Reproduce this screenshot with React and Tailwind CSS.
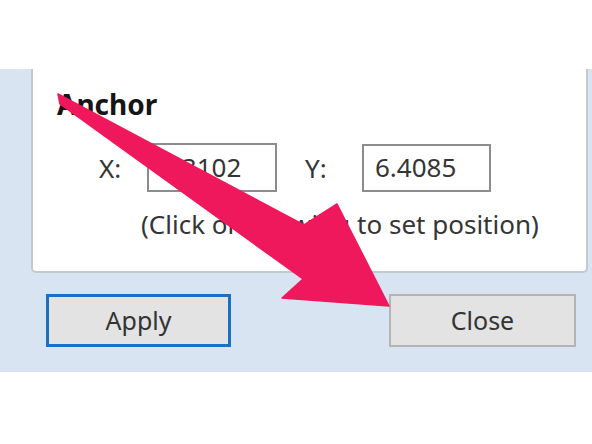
export default function App() {
  return (
    <div className="relative w-[592px] h-[444px] overflow-hidden bg-white font-['Noto_Sans',sans-serif] text-[#353535]">
      <div className="h-[69px] bg-white" />
      <div className="h-[303px] bg-[#d8e4f1] pl-[31px] pr-[4px] flex flex-col">
        {/* Anchor group box */}
        <div className="h-[204px] bg-white border-x-2 border-b-2 border-[#c3c9d0] rounded-b-[5px] pl-[24px] pt-[21px]">
          <div className="text-[28px] leading-[28px] font-bold text-[#151515]">Anchor</div>
          <div className="mt-[25px] ml-[42px] flex items-center">
            <span className="w-[48px] text-[26px] leading-none">X:</span>
            <div className="w-[130px] h-[49px] border-2 border-[#8c8c8c] flex items-center pl-[11px] text-[26px]">5.3102</div>
            <span className="ml-[28px] w-[57px] text-[26px] leading-none">Y:</span>
            <div className="w-[129px] h-[48px] border-2 border-[#8c8c8c] flex items-center pl-[11px] text-[26px]">6.4085</div>
          </div>
          <div className="mt-[18px] ml-[84px] text-[26px] leading-[28px] whitespace-nowrap">(Click on drawing to set position)</div>
        </div>
        {/* Dialog buttons */}
        <div className="mt-[21px] flex">
          <button className="ml-[15px] w-[185px] h-[53px] bg-[#e3e3e3] border-[3px] border-[#1a6fc9] text-[25px] text-[#333]">Apply</button>
          <button className="ml-[158px] w-[187px] h-[53px] bg-[#e3e3e3] border-2 border-[#b4b4b4] text-[25px] text-[#333]">Close</button>
        </div>
      </div>
      <div className="h-[72px] bg-white" />
      {/* Pointer arrow drawn over the dialog */}
      <svg className="pointer-events-none absolute inset-0" width="592" height="444" viewBox="0 0 592 444">
        <polygon
          points="58,94 304,225 337,204 389,306 282,298 303,279 60,104"
          fill="#f0185c"
          stroke="#f0185c"
          strokeWidth="1.5"
          strokeLinejoin="round"
        />
      </svg>
    </div>
  );
}
